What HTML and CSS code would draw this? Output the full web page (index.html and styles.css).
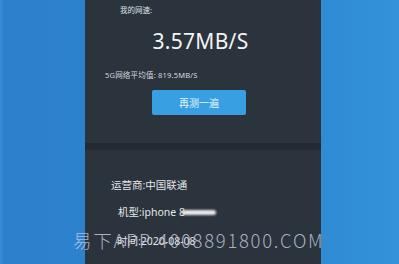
FILE: index.html
```html
<!DOCTYPE html>
<html lang="zh-CN">
<head>
<meta charset="utf-8">
<link rel="stylesheet" href="styles.css">
</head>
<body>
<div class="screen">
  <div class="side side-left"></div>
  <div class="panel">
    <section class="card card-top">
      <div class="label">我的网速:</div>
      <div class="speed">3.57MB/S</div>
      <div class="avg">5G网络平均值: 819.5MB/S</div>
      <div class="btn-row"><button class="btn">再测一遍</button></div>
    </section>
    <section class="card card-bottom">
      <div class="info info-op">运营商:中国联通</div>
      <div class="info info-model">机型:iphone 8<span class="blur"></span></div>
      <div class="info info-time">时间:2020-08-08</div>
    </section>
  </div>
  <div class="side side-right"></div>
  <div class="watermark">易下APP 4008891800.COM</div>
</div>
</body>
</html>
```
FILE: styles.css
```css
html, body {
  margin: 0;
  padding: 0;
}
body {
  width: 399px;
  height: 264px;
  overflow: hidden;
  font-family: "Noto Sans", "Noto Sans CJK SC", sans-serif;
}
.screen {
  position: relative;
  display: flex;
  width: 399px;
  height: 264px;
  background: linear-gradient(90deg, #2d80cc 0%, #2f88d2 50%, #3291d8 100%);
}
.side-left {
  width: 85px;
  flex: none;
  background: linear-gradient(90deg, #3a8ed6 0px, #2c80cc 4px, #2d82ce 100%);
}
.side-right {
  flex: 1;
  background: linear-gradient(90deg, #2f8bd4 0%, #3392da 100%);
}
.panel {
  width: 236px;
  flex: none;
  display: flex;
  flex-direction: column;
  gap: 7px;
  background: #232a31;
}
.card {
  background: #2b333c;
}
.card-top {
  height: 143px;
  box-sizing: border-box;
  padding-top: 5px;
  color: #e6e8ea;
}
.label {
  font-size: 7.5px;
  line-height: 10px;
  margin-left: 35px;
  color: #dfe2e5;
}
.speed {
  font-size: 21px;
  line-height: 28px;
  margin-top: 12px;
  text-align: center;
  padding-right: 5px;
  color: #f2f3f4;
  letter-spacing: 0.3px;
}
.avg {
  font-size: 7.5px;
  line-height: 10px;
  margin-top: 15px;
  margin-left: 20px;
  color: #d6d9dc;
  letter-spacing: 0.2px;
}
.btn-row {
  margin-top: 10px;
  padding-left: 67px;
}
.btn {
  display: block;
  width: 94px;
  height: 25px;
  border: none;
  border-radius: 2px;
  background: #389fe2;
  color: #e8f3fb;
  font-family: "Noto Sans CJK SC", sans-serif;
  font-size: 10px;
  padding: 0;
}
.card-bottom {
  flex: 1;
  padding-top: 28px;
  color: #e4e6e8;
  font-family: "Noto Sans", "Noto Sans CJK SC", sans-serif;
}
.info {
  font-size: 10.5px;
  line-height: 14px;
  display: flex;
  align-items: center;
}
.info-op {
  margin-left: 26px;
}
.info-model {
  margin-left: 33px;
  margin-top: 13px;
}
.info-time {
  margin-left: 32px;
  margin-top: 15px;
}
.blur {
  display: inline-block;
  width: 34px;
  height: 5px;
  margin-left: -3px;
  border-radius: 3px;
  background: #e8e8e8;
  filter: blur(1px);
}
.watermark {
  position: absolute;
  left: 73px;
  top: 228px;
  font-family: "Noto Sans CJK SC", sans-serif;
  font-weight: 300;
  font-size: 18.5px;
  line-height: 24px;
  letter-spacing: 1.7px;
  color: rgba(196, 200, 220, 0.85);
  white-space: nowrap;
}
```
